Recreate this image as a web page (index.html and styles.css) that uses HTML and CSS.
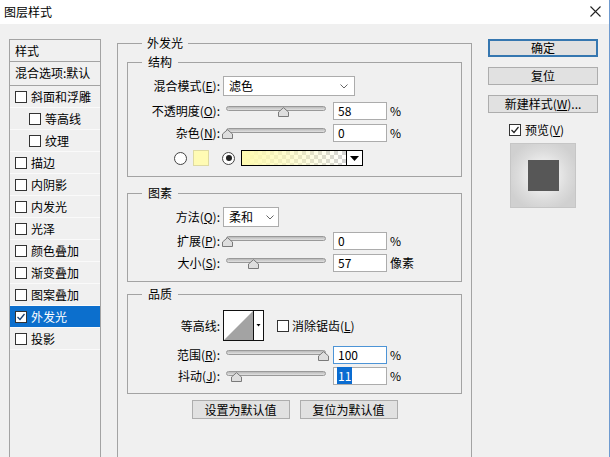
FILE: index.html
```html
<!DOCTYPE html>
<html lang="zh-CN">
<head>
<meta charset="utf-8">
<title>图层样式</title>
<link rel="stylesheet" href="styles.css">
</head>
<body>
<div class="window">
  <div class="titlebar">
    <span class="title">图层样式</span>
    <svg class="close" width="11" height="11" viewBox="0 0 11 11"><path d="M0.5 0.5 L10.5 10.5 M10.5 0.5 L0.5 10.5" stroke="#222" stroke-width="1.1" fill="none"/></svg>
  </div>
  <div class="content">
    <div class="sidebar">
      <div class="side-head">样式</div>
      <div class="side-blend">混合选项:默认</div>
      <div class="side-item"><span class="cb"></span>斜面和浮雕</div>
      <div class="side-item sub"><span class="cb"></span>等高线</div>
      <div class="side-item sub"><span class="cb"></span>纹理</div>
      <div class="side-item"><span class="cb"></span>描边</div>
      <div class="side-item"><span class="cb"></span>内阴影</div>
      <div class="side-item"><span class="cb"></span>内发光</div>
      <div class="side-item"><span class="cb"></span>光泽</div>
      <div class="side-item"><span class="cb"></span>颜色叠加</div>
      <div class="side-item"><span class="cb"></span>渐变叠加</div>
      <div class="side-item"><span class="cb"></span>图案叠加</div>
      <div class="side-item sel"><span class="cb checked"><svg width="10" height="10" viewBox="0 0 10 10"><path d="M1.5 5 L4 7.5 L8.5 2" stroke="#1a3f6e" stroke-width="1.3" fill="none"/></svg></span>外发光</div>
      <div class="side-item"><span class="cb"></span>投影</div>
    </div>

    <div class="main">
      <div class="gtitle outer-title">外发光</div>

      <div class="group g1">
        <div class="gtitle">结构</div>
        <div class="row r-select">
          <span class="lbl">混合模式(<u>E</u>):</span>
          <div class="select sel-blend"><span>滤色</span><svg width="8" height="5" viewBox="0 0 8 5"><path d="M0.5 0.5 L4 4 L7.5 0.5" stroke="#666" fill="none"/></svg></div>
        </div>
        <div class="row r-opacity">
          <span class="lbl">不透明度(<u>O</u>):</span>
          <div class="slider"><div class="track"></div><svg class="thumb" style="left:52px" width="11" height="10" viewBox="0 0 11 10"><path d="M0.5 9.5 L0.5 5 L5.5 0.7 L10.5 5 L10.5 9.5 Z" fill="#dedede" stroke="#7a7a7a"/></svg></div>
          <div class="input">58</div><span class="unit">%</span>
        </div>
        <div class="row r-noise">
          <span class="lbl">杂色(<u>N</u>):</span>
          <div class="slider"><div class="track"></div><svg class="thumb" style="left:-4px" width="11" height="10" viewBox="0 0 11 10"><path d="M0.5 9.5 L0.5 5 L5.5 0.7 L10.5 5 L10.5 9.5 Z" fill="#dedede" stroke="#7a7a7a"/></svg></div>
          <div class="input">0</div><span class="unit">%</span>
        </div>
        <div class="row r-color">
          <span class="radio"></span>
          <span class="swatch"></span>
          <span class="radio on"><span class="dot"></span></span>
          <div class="gradpick">
            <div class="grad"></div>
            <div class="gdrop"><svg width="9" height="5" viewBox="0 0 9 5"><path d="M0 0 L9 0 L4.5 5 Z" fill="#000"/></svg></div>
          </div>
        </div>
      </div>

      <div class="group g2">
        <div class="gtitle">图素</div>
        <div class="row r-method">
          <span class="lbl">方法(<u>Q</u>):</span>
          <div class="select sel-method"><span>柔和</span><svg width="8" height="5" viewBox="0 0 8 5"><path d="M0.5 0.5 L4 4 L7.5 0.5" stroke="#666" fill="none"/></svg></div>
        </div>
        <div class="row r-spread">
          <span class="lbl">扩展(<u>P</u>):</span>
          <div class="slider"><div class="track"></div><svg class="thumb" style="left:-4px" width="11" height="10" viewBox="0 0 11 10"><path d="M0.5 9.5 L0.5 5 L5.5 0.7 L10.5 5 L10.5 9.5 Z" fill="#dedede" stroke="#7a7a7a"/></svg></div>
          <div class="input">0</div><span class="unit">%</span>
        </div>
        <div class="row r-size">
          <span class="lbl">大小(<u>S</u>):</span>
          <div class="slider"><div class="track"></div><svg class="thumb" style="left:22px" width="11" height="10" viewBox="0 0 11 10"><path d="M0.5 9.5 L0.5 5 L5.5 0.7 L10.5 5 L10.5 9.5 Z" fill="#dedede" stroke="#7a7a7a"/></svg></div>
          <div class="input">57</div><span class="unit">像素</span>
        </div>
      </div>

      <div class="group g3">
        <div class="gtitle">品质</div>
        <div class="row r-contour">
          <span class="lbl">等高线:</span>
          <svg class="contour" width="41" height="31" viewBox="0 0 41 31">
            <rect x="0.5" y="0.5" width="40" height="30" fill="#fff" stroke="#111"/>
            <path d="M1 30 L30 1 L30 30 Z" fill="#a3a3a3"/>
            <path d="M30.5 0.5 L30.5 30.5" stroke="#111"/>
            <path d="M33.5 14 L37.5 14 L35.5 16.5 Z" fill="#000"/>
          </svg>
          <span class="cb aa"></span><span class="aa-text">消除锯齿(<u>L</u>)</span>
        </div>
        <div class="row r-range">
          <span class="lbl">范围(<u>R</u>):</span>
          <div class="slider"><div class="track"></div><svg class="thumb" style="left:92px" width="11" height="10" viewBox="0 0 11 10"><path d="M0.5 9.5 L0.5 5 L5.5 0.7 L10.5 5 L10.5 9.5 Z" fill="#dedede" stroke="#7a7a7a"/></svg></div>
          <div class="input focus">100</div><span class="unit">%</span>
        </div>
        <div class="row r-jitter">
          <span class="lbl">抖动(<u>J</u>):</span>
          <div class="slider"><div class="track"></div><svg class="thumb" style="left:5px" width="11" height="10" viewBox="0 0 11 10"><path d="M0.5 9.5 L0.5 5 L5.5 0.7 L10.5 5 L10.5 9.5 Z" fill="#dedede" stroke="#7a7a7a"/></svg></div>
          <div class="input"><span class="hl">11</span></div><span class="unit">%</span>
        </div>
      </div>

      <div class="btnrow">
        <div class="btn wide">设置为默认值</div>
        <div class="btn wide">复位为默认值</div>
      </div>
    </div>

    <div class="actions">
      <div class="btn primary">确定</div>
      <div class="btn">复位</div>
      <div class="btn">新建样式(<u>W</u>)...</div>
      <div class="check-row"><span class="cb checked"><svg width="10" height="10" viewBox="0 0 10 10"><path d="M1.5 5 L4 7.5 L8.5 2" stroke="#222" stroke-width="1.2" fill="none"/></svg></span><span>预览(<u>V</u>)</span></div>
      <div class="preview"><div class="preview-square"></div></div>
    </div>
  </div>
</div>
</body>
</html>
```

FILE: styles.css
```css
html, body {
  margin: 0;
  padding: 0;
}

body {
  width: 610px;
  height: 457px;
  overflow: hidden;
  background: #f0f0f0;
  font-family: "Noto Sans CJK SC", "Microsoft YaHei", sans-serif;
  font-size: 12px;
  line-height: 16px;
  color: #000;
}

u {
  text-decoration: underline;
  text-underline-offset: 1px;
}

.window {
  height: 457px;
  box-sizing: border-box;
  border-right: 1px solid #6f9bd0;
  display: flex;
  flex-direction: column;
}

.titlebar {
  height: 24px;
  flex: none;
  background: #fff;
  display: flex;
  align-items: center;
  justify-content: space-between;
  padding: 0 8px 0 4px;
}

.title {
  line-height: 16px;
  margin-top: -1px;
}

.close {
  display: block;
  margin-top: -2px;
}

.content {
  flex: 1;
  display: flex;
  align-items: stretch;
  min-height: 0;
}

/* ---------- sidebar ---------- */
.sidebar {
  margin: 15px 0 0 9px;
  width: 92px;
  flex: none;
  box-sizing: border-box;
  border: 1px solid #a3a3a3;
  border-bottom: none;
}

.side-head {
  height: 21px;
  line-height: 21px;
  padding-left: 5px;
  border-bottom: 1px solid #a3a3a3;
}

.side-blend {
  height: 23px;
  line-height: 22px;
  padding-left: 5px;
  border-bottom: 1px solid #a3a3a3;
  white-space: nowrap;
}

.side-item {
  height: 21px;
  border-bottom: 1px solid #fafafa;
  display: flex;
  align-items: center;
  padding-left: 5px;
  white-space: nowrap;
}

.side-item.sub {
  padding-left: 19px;
}

.side-item.sel {
  background: #0c6fcd;
  color: #fff;
}

.cb {
  width: 12px;
  height: 12px;
  box-sizing: border-box;
  border: 1px solid #333;
  background: #fff;
  margin-right: 4px;
  flex: none;
  display: flex;
  align-items: center;
  justify-content: center;
}

.cb svg {
  display: block;
}

/* ---------- main group ---------- */
.main {
  margin: 19px 0 0 16px;
  width: 355px;
  flex: none;
  box-sizing: border-box;
  border: 1px solid #a3a3a3;
  border-bottom: none;
  padding: 0 9px;
}

.gtitle {
  width: max-content;
  height: 16px;
  line-height: 16px;
  margin: -9px 0 0 14px;
  padding: 0 6px;
  background: #f0f0f0;
}

.outer-title {
  margin-left: 15px;
  padding: 0 5px;
}

.group {
  border: 1px solid #a3a3a3;
}

.g1 {
  margin-top: 11px;
  padding-bottom: 10px;
}

.g2 {
  margin-top: 16px;
  padding-bottom: 9px;
}

.g3 {
  margin-top: 12px;
  padding-bottom: 8px;
}

.row {
  display: flex;
  align-items: center;
}

.lbl {
  width: 92px;
  flex: none;
  text-align: right;
  white-space: nowrap;
}

.r-select { margin-top: 6px; height: 20px; }
.r-opacity { margin-top: 6px; height: 18px; }
.r-noise { margin-top: 4px; height: 18px; }
.r-color { margin-top: 8px; height: 16px; }
.r-method { margin-top: 6px; height: 20px; }
.r-spread { margin-top: 5px; height: 18px; }
.r-size { margin-top: 4px; height: 18px; }
.r-contour { margin-top: 8px; height: 31px; }
.r-range { margin-top: 5px; height: 18px; }
.r-jitter { margin-top: 3px; height: 18px; }

.select {
  height: 20px;
  box-sizing: border-box;
  border: 1px solid #acacac;
  background: #fff;
  margin-left: 3px;
  display: flex;
  align-items: center;
  justify-content: space-between;
  padding: 0 6px 0 5px;
}

.select svg {
  display: block;
}

.sel-blend { width: 132px; }
.sel-method { width: 56px; padding-right: 4px; }

.slider {
  position: relative;
  width: 100px;
  height: 18px;
  margin-left: 6px;
  flex: none;
}

.track {
  margin-top: 4px;
  height: 5px;
  box-sizing: border-box;
  border: 1px solid #999;
  border-radius: 3px;
  background: linear-gradient(#b9b9b9, #e2e2e2);
}

.thumb {
  position: absolute;
  top: 5px;
  display: block;
}

.input {
  width: 54px;
  height: 18px;
  box-sizing: border-box;
  border: 1px solid #acacac;
  background: #fff;
  margin-left: 7px;
  padding-left: 4px;
  line-height: 16px;
  flex: none;
}

.input.focus {
  border-color: #4d94d6;
}

.hl {
  background: #0a6cd1;
  color: #fff;
  padding: 0 1px;
  margin-left: -1px;
}

.unit {
  margin-left: 3px;
}

/* colour row */
.radio {
  width: 13px;
  height: 13px;
  box-sizing: border-box;
  border-radius: 50%;
  border: 1px solid #444;
  background: #fff;
  margin-left: 46px;
  flex: none;
  display: flex;
  align-items: center;
  justify-content: center;
}

.radio.on {
  margin-left: 13px;
}

.dot {
  width: 6px;
  height: 6px;
  border-radius: 50%;
  background: #222;
}

.swatch {
  width: 16px;
  height: 16px;
  box-sizing: border-box;
  border: 1px solid #dedaa2;
  background: #fffbb4;
  margin-left: 6px;
  flex: none;
}

.gradpick {
  display: flex;
  height: 16px;
  box-sizing: border-box;
  border: 1px solid #000;
  margin-left: 6px;
}

.grad {
  width: 104px;
  background:
    linear-gradient(to right, #fffbb0 0%, rgba(255, 251, 176, 0.6) 45%, rgba(255, 251, 176, 0) 100%),
    conic-gradient(#d4d4d4 25%, #fff 0 50%, #d4d4d4 0 75%, #fff 0) 0 0 / 8px 8px;
}

.gdrop {
  width: 15px;
  border-left: 1px solid #000;
  background: #fff;
  display: flex;
  align-items: center;
  justify-content: center;
}

.gdrop svg {
  display: block;
}

/* contour row */
.contour {
  display: block;
  margin-left: 3px;
  flex: none;
}

.cb.aa {
  margin-left: 13px;
  margin-right: 3px;
}

/* default buttons */
.btnrow {
  display: flex;
  justify-content: center;
  gap: 10px;
  margin-top: 6px;
}

.btn {
  height: 19px;
  box-sizing: border-box;
  border: 1px solid #adadad;
  background: #e1e1e1;
  display: flex;
  align-items: center;
  justify-content: center;
  white-space: nowrap;
}

.btn.wide {
  width: 98px;
}

/* right column */
.actions {
  margin: 15px 0 0 16px;
  width: 110px;
  flex: none;
  display: flex;
  flex-direction: column;
}

.actions .btn {
  height: 18px;
  margin-top: 10px;
}

.actions .btn.primary {
  margin-top: 0;
  border: 2px solid #3677b0;
}

.check-row {
  display: flex;
  align-items: center;
  height: 13px;
  margin: 10px 0 0 21px;
}

.preview {
  margin: 7px 0 0 22px;
  width: 66px;
  height: 65px;
  box-sizing: border-box;
  border: 1px solid #c6c6c6;
  background: radial-gradient(circle at 50% 50%, #f4f4f4 0, #ececec 30%, #dcdcdc 55%, #d0d0d0 80%);
  display: flex;
  align-items: center;
  justify-content: center;
}

.preview-square {
  width: 31px;
  height: 31px;
  background: #575757;
}
```
